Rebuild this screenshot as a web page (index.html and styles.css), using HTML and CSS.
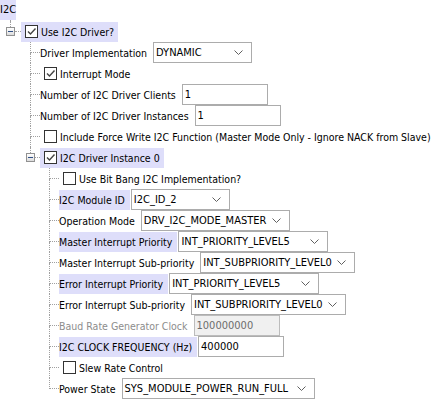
FILE: index.html
```html
<!DOCTYPE html>
<html>
<head>
<meta charset="utf-8">
<link rel="stylesheet" href="styles.css">
</head>
<body>
<div class="tree">
  <div class="root">
    <span class="lbl hl rootlbl">I2C</span>
    <span class="stub"></span>
  </div>
  <div class="kids k0">
    <div class="row">
      <span class="exp"><span class="up"></span><span class="box"></span></span>
      <span class="hdash d6"></span>
      <span class="ck hl"><span class="cb on"><svg viewBox="0 0 11 11" width="11" height="11"><path d="M2 5.5 L4.5 8 L9.5 2.5" fill="none" stroke="#444" stroke-width="1.4"/></svg></span>Use I2C Driver?</span>
    </div>
    <div class="kids k1">
      <div class="row">
        <span class="conn"></span>
        <span class="lbl">Driver Implementation</span>
        <span class="sel w99">DYNAMIC<svg class="chev" viewBox="0 0 9 5" width="9" height="5"><path d="M0.5 0.5 L4.5 4.5 L8.5 0.5" fill="none" stroke="#606060" stroke-width="1"/></svg></span>
      </div>
      <div class="row">
        <span class="conn"></span>
        <span class="ck"><span class="cb on"><svg viewBox="0 0 11 11" width="11" height="11"><path d="M2 5.5 L4.5 8 L9.5 2.5" fill="none" stroke="#444" stroke-width="1.4"/></svg></span>Interrupt Mode</span>
      </div>
      <div class="row">
        <span class="conn"></span>
        <span class="lbl">Number of I2C Driver Clients</span>
        <span class="inp">1</span>
      </div>
      <div class="row">
        <span class="conn"></span>
        <span class="lbl">Number of I2C Driver Instances</span>
        <span class="inp">1</span>
      </div>
      <div class="row">
        <span class="conn"></span>
        <span class="ck"><span class="cb"></span>Include Force Write I2C Function (Master Mode Only - Ignore NACK from Slave)</span>
      </div>
      <div class="row">
        <span class="exp"><span class="up"></span><span class="box"></span></span>
        <span class="hdash d5"></span>
        <span class="ck hl"><span class="cb on"><svg viewBox="0 0 11 11" width="11" height="11"><path d="M2 5.5 L4.5 8 L9.5 2.5" fill="none" stroke="#444" stroke-width="1.4"/></svg></span>I2C Driver Instance 0</span>
      </div>
      <div class="kids k2">
        <div class="row">
          <span class="conn"></span>
          <span class="ck"><span class="cb"></span>Use Bit Bang I2C Implementation?</span>
        </div>
        <div class="row">
          <span class="conn"></span>
          <span class="lbl hl">I2C Module ID</span>
          <span class="sel w99">I2C_ID_2<svg class="chev" viewBox="0 0 9 5" width="9" height="5"><path d="M0.5 0.5 L4.5 4.5 L8.5 0.5" fill="none" stroke="#606060" stroke-width="1"/></svg></span>
        </div>
        <div class="row">
          <span class="conn"></span>
          <span class="lbl">Operation Mode</span>
          <span class="sel w149">DRV_I2C_MODE_MASTER<svg class="chev" viewBox="0 0 9 5" width="9" height="5"><path d="M0.5 0.5 L4.5 4.5 L8.5 0.5" fill="none" stroke="#606060" stroke-width="1"/></svg></span>
        </div>
        <div class="row">
          <span class="conn"></span>
          <span class="lbl hl">Master Interrupt Priority</span>
          <span class="sel w150">INT_PRIORITY_LEVEL5<svg class="chev" viewBox="0 0 9 5" width="9" height="5"><path d="M0.5 0.5 L4.5 4.5 L8.5 0.5" fill="none" stroke="#606060" stroke-width="1"/></svg></span>
        </div>
        <div class="row">
          <span class="conn"></span>
          <span class="lbl">Master Interrupt Sub-priority</span>
          <span class="sel w155">INT_SUBPRIORITY_LEVEL0<svg class="chev" viewBox="0 0 9 5" width="9" height="5"><path d="M0.5 0.5 L4.5 4.5 L8.5 0.5" fill="none" stroke="#606060" stroke-width="1"/></svg></span>
        </div>
        <div class="row">
          <span class="conn"></span>
          <span class="lbl hl">Error Interrupt Priority</span>
          <span class="sel w150">INT_PRIORITY_LEVEL5<svg class="chev" viewBox="0 0 9 5" width="9" height="5"><path d="M0.5 0.5 L4.5 4.5 L8.5 0.5" fill="none" stroke="#606060" stroke-width="1"/></svg></span>
        </div>
        <div class="row">
          <span class="conn"></span>
          <span class="lbl">Error Interrupt Sub-priority</span>
          <span class="sel w155">INT_SUBPRIORITY_LEVEL0<svg class="chev" viewBox="0 0 9 5" width="9" height="5"><path d="M0.5 0.5 L4.5 4.5 L8.5 0.5" fill="none" stroke="#606060" stroke-width="1"/></svg></span>
        </div>
        <div class="row">
          <span class="conn"></span>
          <span class="lbl dis">Baud Rate Generator Clock</span>
          <span class="inp disinp">100000000</span>
        </div>
        <div class="row">
          <span class="conn"></span>
          <span class="lbl hl">I2C CLOCK FREQUENCY (Hz)</span>
          <span class="inp">400000</span>
        </div>
        <div class="row">
          <span class="conn"></span>
          <span class="ck"><span class="cb"></span>Slew Rate Control</span>
        </div>
        <div class="row last">
          <span class="conn"></span>
          <span class="lbl">Power State</span>
          <span class="sel w193">SYS_MODULE_POWER_RUN_FULL<svg class="chev" viewBox="0 0 9 5" width="9" height="5"><path d="M0.5 0.5 L4.5 4.5 L8.5 0.5" fill="none" stroke="#606060" stroke-width="1"/></svg></span>
        </div>
      </div>
    </div>
  </div>
</div>
</body>
</html>
```

FILE: styles.css
```css
body {
  margin: 0;
  background: #fff;
  color: #000;
  font-family: "DejaVu Sans Condensed", "Liberation Sans", Arial, sans-serif;
  font-stretch: condensed;
  font-size: 11px;
}

.tree {
  display: flex;
  flex-direction: column;
}

.root {
  display: flex;
  flex-direction: column;
  align-items: flex-start;
  height: 21px;
}

.rootlbl {
  height: 16px;
  line-height: 16px;
  padding: 0;
}

.stub {
  flex: 1;
  margin-left: 10px;
  border-left: 1px dotted #a0a0a0;
}

.k0 { padding-left: 10px; }
.k1 { padding-left: 20px; }
.k2 { padding-left: 19px; }

.row {
  display: flex;
  align-items: center;
  height: 21px;
  white-space: nowrap;
}

.exp {
  align-self: stretch;
  display: flex;
  flex-direction: column;
  width: 9px;
  margin-left: -4px;
  flex-shrink: 0;
}

.exp .up {
  height: 6px;
  margin-left: 4px;
  border-left: 1px dotted #a0a0a0;
}

.exp .box {
  box-sizing: border-box;
  width: 9px;
  height: 9px;
  border: 1px solid #919191;
  background: linear-gradient(#ffffff, #dcdcdc);
  display: flex;
  align-items: center;
  justify-content: center;
}

.exp .box::before {
  content: "";
  width: 5px;
  height: 1px;
  background: #2f4f86;
}

.hdash {
  align-self: flex-start;
  height: 10px;
  border-bottom: 1px dotted #a0a0a0;
  flex-shrink: 0;
}

.d6 { width: 6px; }
.d5 { width: 5px; }

.conn {
  align-self: stretch;
  width: 10px;
  display: flex;
  flex-direction: column;
  flex-shrink: 0;
}

.conn::before {
  content: "";
  height: 10px;
  border-left: 1px dotted #a0a0a0;
  border-bottom: 1px dotted #a0a0a0;
}

.conn::after {
  content: "";
  flex: 1;
  border-left: 1px dotted #a0a0a0;
}

.last .conn::after {
  border-left: none;
}

.lbl {
  height: 20px;
  line-height: 20px;
  padding-right: 5px;
  font-size: 10.5px;
}

.rootlbl {
  font-size: 11px;
  padding-right: 0;
}

.hl {
  background: #dedefa;
}

.dis {
  color: #8d8d8d;
}

.ck {
  display: flex;
  align-items: center;
  gap: 3px;
  height: 20px;
  padding: 0 4px;
  font-size: 10.5px;
}

.cb {
  box-sizing: border-box;
  width: 13px;
  height: 13px;
  border: 1px solid #333;
  background: #fff;
  display: flex;
  align-items: center;
  justify-content: center;
  flex-shrink: 0;
}

.sel,
.inp {
  box-sizing: border-box;
  height: 21px;
  margin-left: 1px;
  padding: 0 2px;
  border: 1px solid #acacac;
  background: #fff;
  display: flex;
  align-items: center;
  flex-shrink: 0;
}

.sel {
  justify-content: space-between;
}

.chev {
  margin-right: 6px;
}

.inp { width: 86px; }
.disinp {
  background: #f0f0f0;
  color: #6d6d6d;
  border-color: #bcbcbc;
}

.w99 { width: 99px; }
.w149 { width: 149px; }
.w150 { width: 150px; }
.w155 { width: 155px; }
.w193 { width: 193px; }
```
